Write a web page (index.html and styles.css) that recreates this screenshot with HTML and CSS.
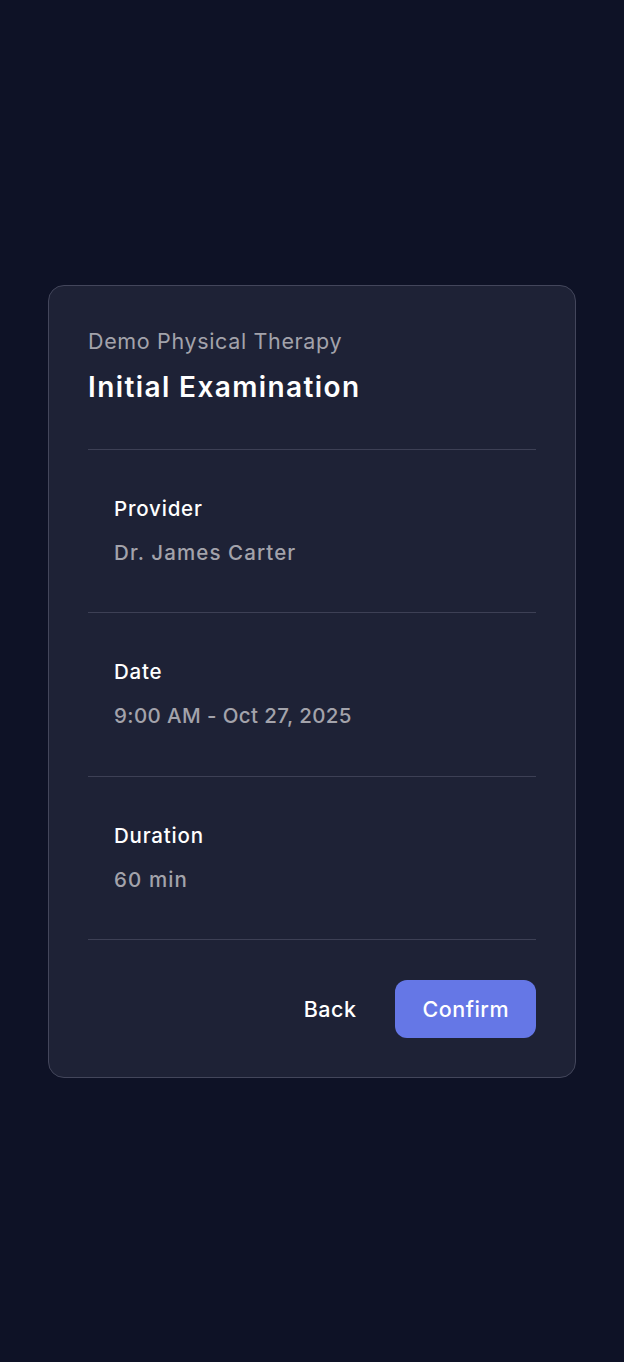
FILE: index.html
```html
<!DOCTYPE html>
<html lang="en">
<head>
<meta charset="utf-8">
<title>Confirm appointment</title>
<link rel="stylesheet" href="styles.css">
</head>
<body>
<main class="page">
  <section class="card">
    <header class="card-head">
      <p class="clinic">Demo Physical Therapy</p>
      <h1 class="title">Initial Examination</h1>
    </header>
    <dl class="details">
      <div class="row">
        <dt class="label">Provider</dt>
        <dd class="value">Dr. James Carter</dd>
      </div>
      <div class="row">
        <dt class="label">Date</dt>
        <dd class="value value-date">9:00 AM - Oct 27, 2025</dd>
      </div>
      <div class="row">
        <dt class="label">Duration</dt>
        <dd class="value">60 min</dd>
      </div>
    </dl>
    <div class="actions">
      <button class="btn btn-back" type="button">Back</button>
      <button class="btn btn-confirm" type="button">Confirm</button>
    </div>
  </section>
</main>
</body>
</html>
```
FILE: styles.css
```css
* { box-sizing: border-box; }
html, body {
  margin: 0;
  padding: 0;
  background: #0e1226;
}
body {
  font-family: Inter, "Noto Sans", "Liberation Sans", sans-serif;
  color: #ffffff;
}
.page {
  min-height: 1362px;
  display: flex;
  justify-content: center;
  padding-top: 285px;
  padding-left: 48px;
  padding-right: 48px;
}
.card {
  width: 528px;
  height: 793px;
  background: #1e2236;
  border: 1px solid #43465b;
  border-radius: 16px;
  padding: 40px 39px 39px 39px;
  display: flex;
  flex-direction: column;
}
.card-head {
  padding-bottom: 44px;
  border-bottom: 1px solid #3d4055;
}
.clinic {
  margin: 0;
  font-size: 21.5px;
  line-height: 30px;
  letter-spacing: 0.65px;
  color: #a3a3ab;
  font-weight: 400;
}
.title {
  margin: 13px 0 0 0;
  font-size: 28px;
  line-height: 36px;
  letter-spacing: 1.4px;
  font-weight: 600;
  color: #ffffff;
}
.details {
  margin: 0;
}
.row {
  padding: 45.15px 26px;
  border-bottom: 1px solid #3d4055;
  display: flex;
  flex-direction: column;
  gap: 16px;
}
.label {
  font-size: 20.5px;
  line-height: 28px;
  letter-spacing: 0.8px;
  font-weight: 500;
  color: #ffffff;
}
.value {
  margin: 0;
  font-size: 20.5px;
  line-height: 28px;
  letter-spacing: 1.1px;
  font-weight: 500;
  color: #a3a3ab;
}
.value-date {
  letter-spacing: 0.4px;
}
.actions {
  margin-top: 40px;
  display: flex;
  justify-content: flex-end;
  gap: 12px;
}
.btn {
  font-family: inherit;
  font-size: 21.5px;
  letter-spacing: 0.5px;
  font-weight: 500;
  height: 58px;
  padding: 0 27px;
  border: none;
  border-radius: 12px;
  cursor: pointer;
  color: #ffffff;
}
.btn-back {
  background: transparent;
}
.btn-confirm {
  background: #6577e6;
}
```
